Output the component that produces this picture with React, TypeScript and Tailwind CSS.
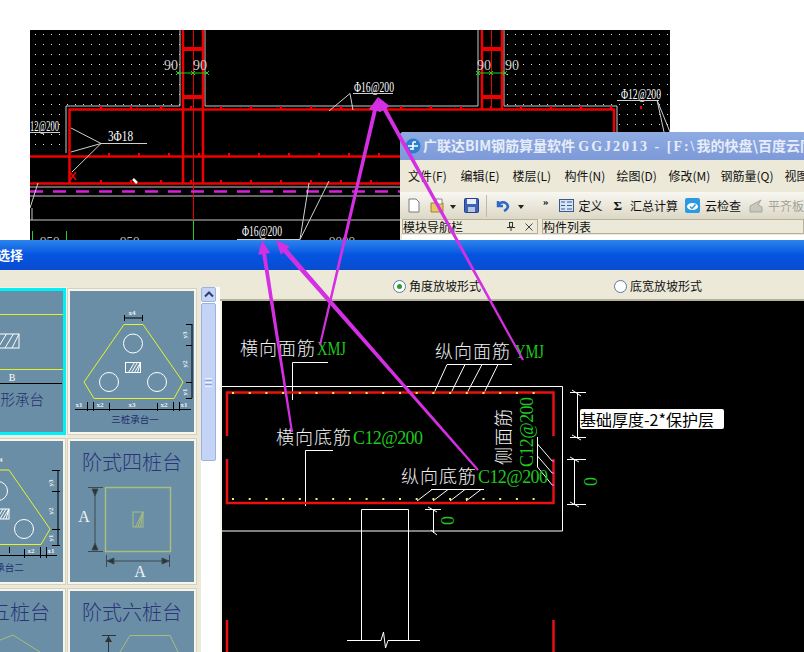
import React from 'react';

const cjk = '"Noto Sans CJK SC", "Noto Sans", sans-serif';
const serif = '"Liberation Serif", "Noto Sans CJK SC", serif';

const steps = (from: number, to: number, step: number) => {
  const out: number[] = [];
  for (let v = from; v <= to; v += step) out.push(v);
  return out;
};

// tapered magenta arrow from a thin tail to a wide head
const Arrow = ({ x1, y1, x2, y2, w1, w2 }: { x1: number; y1: number; x2: number; y2: number; w1: number; w2: number }) => {
  const len = Math.hypot(x2 - x1, y2 - y1);
  const ux = (x2 - x1) / len;
  const uy = (y2 - y1) / len;
  const nx = -uy;
  const ny = ux;
  const hx = x2 - ux * 14;
  const hy = y2 - uy * 14;
  const body = [
    [x1 + nx * w1, y1 + ny * w1],
    [hx + nx * w2, hy + ny * w2],
    [hx + nx * 6, hy + ny * 6],
    [x2, y2],
    [hx - nx * 6, hy - ny * 6],
    [hx - nx * w2, hy - ny * w2],
    [x1 - nx * w1, y1 - ny * w1],
  ];
  return <polygon points={body.map((p) => p.join(',')).join(' ')} fill="#d42fe2" />;
};

const Hatch = ({ x, y, w, h, color = '#fff', n = 4 }: { x: number; y: number; w: number; h: number; color?: string; n?: number }) => (
  <g stroke={color} strokeWidth="1" fill="none">
    <rect x={x} y={y} width={w} height={h} />
    {steps(1, n, 1).map((i) => {
      const px = x + (i * w) / (n + 1);
      return <line key={i} x1={px} y1={y + h} x2={Math.min(px + h * 0.6, x + w)} y2={y} />;
    })}
  </g>
);

const RebarText = ({ x, y, t, w }: { x: number; y: number; t: string; w: number }) => (
  <text x={x} y={y} fill="#fff" fontSize="14" fontFamily={serif} textLength={w} lengthAdjust="spacingAndGlyphs">
    {t}
  </text>
);

const TopDrawing = () => {
  const redTicks = steps(100, 670, 30);
  return (
    <svg viewBox="30 30 640 210" className="w-[640px] h-[210px] block bg-black">
      <defs>
        <pattern id="dots" x="0" y="0" width="8" height="10" patternUnits="userSpaceOnUse">
          <rect x="3" y="4" width="1" height="1" fill="#e4e4e4" />
        </pattern>
      </defs>
      <path d="M30 30H180V106H66V153H30Z" fill="url(#dots)" />
      <path d="M504 30H670V132H617V106H504Z" fill="url(#dots)" />
      {/* walls */}
      <g stroke="#c8c8c8" strokeWidth="1" fill="none">
        <path d="M180 30V106H66V153" />
        <path d="M205 30V106H478V30" />
        <path d="M504 30V106H617V132" />
        <path d="M30 187H670M30 196H670M30 220H670" />
        <path d="M32 208V220" />
      </g>
      {/* rebar */}
      <g stroke="#f00000" fill="none">
        <path d="M69.500 183V109.500H614V132" strokeWidth="2.500" />
        <path d="M30 156.500H670M30 183.500H670" strokeWidth="2.500" />
        <path d="M183 30V183M203 30V183M482 30V109M502 30V109" strokeWidth="2.500" />
        <path d="M193.500 30V220M491.500 30V109" strokeWidth="1" />
        <path d="M184 49H202M184 97H202M483 49H501M483 97H501" strokeWidth="4" />
        <path d="M70 180L76 172M70 172L76 180" strokeWidth="1.500" />
      </g>
      <g fill="#f00000">
        {redTicks.map((x) => (
          <g key={x}>
            <rect x={x} y={106} width="2" height="3" />
            <rect x={x + 8} y={153} width="2" height="3" />
            <rect x={x} y={180} width="2" height="3" />
          </g>
        ))}
      </g>
      {/* dashed centre line */}
      <line x1="30" y1="191.500" x2="670" y2="191.500" stroke="#d81fe0" strokeWidth="2.500" strokeDasharray="13 10" />
      {/* green dims */}
      <g stroke="#22d022" fill="none">
        <path d="M178 73H207M479 73H506" strokeWidth="1" />
        <path d="M193.500 220V240M32.500 231V240M66.500 231V240" strokeWidth="1" />
        <path d="M176 71l4 4M176 75l4-4M191 71l4 4M191 75l4-4M205 71l4 4M205 75l4-4M476 71l4 4M476 75l4-4M489 71l4 4M489 75l4-4M503 71l4 4M503 75l4-4" strokeWidth="1" />
      </g>
      <g fill="#cfcfcf" fontFamily={serif} fontSize="14">
        <text x="164" y="70">90</text>
        <text x="193" y="70">90</text>
        <text x="477" y="70">90</text>
        <text x="505" y="70">90</text>
      </g>
      <RebarText x={354} y={92} t="Φ16@200" w={40} />
      <RebarText x={621} y={99} t="Φ12@200" w={40} />
      <RebarText x={242} y={236} t="Φ16@200" w={40} />
      <RebarText x={30} y={131} t="12@200" w={29} />
      <RebarText x={108} y={141} t="3Φ18" w={25} />
      <g fill="#bdbdbd" fontSize="13" fontFamily={serif}>
        <text x="40" y="245">950</text>
        <text x="120" y="245">950</text>
        <text x="329" y="245">9000</text>
      </g>
      {/* leaders */}
      <g stroke="#d0d0d0" strokeWidth="1" fill="none">
        <path d="M353 93.500H393M329 111L350 93.500L353 110" />
        <path d="M617 100.500H659M657 100L670 132M657 100L664 132" />
        <path d="M237 239.500H300L309 183M300 239.500L329 181" />
        <path d="M30 132.500H60" />
        <path d="M147 143.500H101L71 128M101 143.500L71 152M101 143.500L72 172" />
        <path d="M38 183L30 208" />
      </g>
      <line x1="133" y1="179" x2="137" y2="183" stroke="#fff" strokeWidth="2.500" />
    </svg>
  );
};

const Tile = ({ viewBox, selected, children }: { viewBox: string; selected?: boolean; children: React.ReactNode }) => (
  <div
    className={
      selected
        ? 'h-[141px] bg-[#6a8ea6] outline-[3px] outline-[#00f0f8] shadow-[0_0_0_5px_#f3f1e6]'
        : 'h-[141px] bg-[#6a8ea6] shadow-[0_0_0_2px_#f7f5ec,0_0_0_3px_#d6d2c0]'
    }
  >
    <svg viewBox={viewBox} className="w-[124px] h-[141px] block">
      {children}
    </svg>
  </div>
);

const DimText = ({ x, y, t, rot }: { x: number; y: number; t: string; rot?: boolean }) => (
  <text
    x={x}
    y={y}
    fill="#f0f0f0"
    fontSize="7"
    fontWeight="700"
    fontFamily={serif}
    textAnchor="middle"
    transform={rot ? `rotate(-90 ${x} ${y})` : undefined}
  >
    {t}
  </text>
);

const TileList = () => (
  <div className="grid grid-cols-[124px_124px] gap-x-[7px] gap-y-[9px] -ml-[61px] w-[255px]">
    <Tile viewBox="-61 291 124 141" selected>
      <g stroke="#e4f020" strokeWidth="1">
        <path d="M-61 314.500H63M-61 369.500H63" />
      </g>
      <Hatch x={-30} y={334} w={49} h={14} n={6} />
      <path d="M-61 383.500H62" stroke="#000" />
      <text x="12" y="381" fill="#fff" fontSize="10" fontFamily={serif} textAnchor="middle">B</text>
      <text x="-14" y="405" fill="#232f6e" fontSize="14.500" fontFamily={cjk} fontWeight="300">矩形承台</text>
    </Tile>
    <Tile viewBox="70 291 124 141">
      <polygon points="124,324.500 143,324.500 183,382 174,398.500 94,398.500 84,382" fill="none" stroke="#e8f428" />
      <g fill="none" stroke="#fff">
        <circle cx="133" cy="343.500" r="9.500" />
        <circle cx="109" cy="382" r="9.500" />
        <circle cx="157" cy="382" r="9.500" />
      </g>
      <Hatch x={125.500} y={362.500} w={15} h={10} />
      <g stroke="#000" fill="none">
        <path d="M124.500 315V321M142.500 315V321M124.500 318H142.500" />
        <path d="M192 324V398M186 324.500H192M186 345.500H192M186 382.500H192M186 398.500H192" />
        <path d="M75 409.500H191M87.500 402V411M93.500 402V411M109.500 403V411M157.500 403V411M173.500 402V411M179.500 402V411" />
      </g>
      <DimText x={132} y={315} t="x4" />
      <DimText x={79} y={407} t="x1" />
      <DimText x={100} y={407} t="x2" />
      <DimText x={132} y={407} t="x3" />
      <DimText x={164} y={407} t="x2" />
      <DimText x={184} y={407} t="x1" />
      <DimText x={187} y={335} t="y3" rot />
      <DimText x={187} y={364} t="y2" rot />
      <DimText x={187} y={392} t="y1" rot />
      <text x="135" y="423" fill="#232f6e" fontSize="9.500" fontFamily={cjk} textAnchor="middle">三桩承台一</text>
    </Tile>
    <Tile viewBox="-61 441 124 141">
      <polygon points="-10,470 9,470 50,529 41,544.500 -39,544.500 -49,529" fill="none" stroke="#e8f428" />
      <g fill="none" stroke="#fff">
        <circle cx="-2" cy="491" r="9.500" />
        <circle cx="24" cy="529" r="9.500" />
      </g>
      <Hatch x={-6} y={509} w={15} h={10} />
      <g stroke="#000" fill="none">
        <path d="M58 470V545M52 470.500H60M52 491.500H60M52 529.500H60M52 545.500H60" />
        <path d="M-50 555.500H57M24.500 549V558M40.500 547V558M46.500 547V558M9.500 547V553" />
      </g>
      <DimText x={-1} y={462} t="x4" />
      <DimText x={31} y={553} t="x2" />
      <DimText x={51} y={553} t="x1" />
      <DimText x={53} y={483} t="y3" rot />
      <DimText x={53} y={511} t="y2" rot />
      <DimText x={53} y={538} t="y1" rot />
      <text x="0" y="571" fill="#232f6e" fontSize="9.500" fontFamily={cjk} textAnchor="middle">三桩承台二</text>
    </Tile>
    <Tile viewBox="70 441 124 141">
      <text x="132" y="470" fill="#2a3578" fontSize="20" fontFamily={cjk} fontWeight="300" textAnchor="middle">阶式四桩台</text>
      <rect x="105.500" y="487.500" width="65" height="64" fill="none" stroke="#a6bd7e" strokeWidth="1.500" />
      <Hatch x={133} y={512} w={10} h={15} color="#a6bd7e" n={3} />
      <g stroke="#3d4a52" fill="#2c3438">
        <path d="M95 489V550M88 487.500H103M88 551.500H103" fill="none" />
        <path d="M92 489H98L95 496ZM92 550H98L95 543Z" />
        <path d="M107 561H169M106.500 555V567M169.500 555V567" fill="none" />
        <path d="M107 561L114 558V564ZM169 561L162 558V564Z" />
      </g>
      <text x="84" y="522" fill="#f2f2f2" fontSize="16" fontFamily={serif} textAnchor="middle">A</text>
      <text x="140" y="577" fill="#f2f2f2" fontSize="16" fontFamily={serif} textAnchor="middle">A</text>
    </Tile>
    <Tile viewBox="-61 591 124 141">
      <text x="0" y="620" fill="#2a3578" fontSize="20" fontFamily={cjk} fontWeight="300" textAnchor="middle">阶式五桩台</text>
      <path d="M-30 652L13 635L40 652" fill="none" stroke="#a6bd7e" />
    </Tile>
    <Tile viewBox="70 591 124 141">
      <text x="132" y="620" fill="#2a3578" fontSize="20" fontFamily={cjk} fontWeight="300" textAnchor="middle">阶式六桩台</text>
      <path d="M120 652L130 635.500H170L178 652" fill="none" stroke="#a6bd7e" />
      <path d="M102 635.500H116M108.500 636V652" fill="none" stroke="#2c3438" />
      <path d="M105 642H112L108.500 636Z" fill="#2c3438" />
    </Tile>
  </div>
);

const ScrollBar = () => (
  <div className="w-[15px] flex flex-col bg-white">
    <div className="h-[15px] rounded-[2px] border border-[#9db2dd] bg-[#c6d5f5] flex items-center justify-center">
      <svg width="10" height="7" viewBox="0 0 10 7">
        <path d="M1 5.500L5 1.500L9 5.500" stroke="#2a3f78" strokeWidth="2" fill="none" />
      </svg>
    </div>
    <div className="h-[158px] mt-[1px] rounded-[2px] border border-[#9db2dd] bg-[#c4d3f6] flex flex-col gap-[1px] items-center justify-center">
      <div className="w-[7px] h-[1px] bg-[#eef2fc]" />
      <div className="w-[7px] h-[1px] bg-[#8ea4d6]" />
      <div className="w-[7px] h-[1px] bg-[#eef2fc]" />
      <div className="w-[7px] h-[1px] bg-[#8ea4d6]" />
      <div className="w-[7px] h-[1px] bg-[#eef2fc]" />
    </div>
  </div>
);

const CadLabel = ({ x, y, t, size = 18, spacing = 0, fill = '#f2f2f2', rot }: { x: number; y: number; t: string; size?: number; spacing?: number; fill?: string; rot?: boolean }) => (
  <text
    x={x}
    y={y}
    fill={fill}
    fontSize={size}
    letterSpacing={spacing}
    fontFamily={cjk}
    fontWeight="300"
    transform={rot ? `rotate(-90 ${x} ${y})` : undefined}
  >
    {t}
  </text>
);

const CadCode = ({ x, y, t, width, rot, squeeze }: { x: number; y: number; t: string; width?: number; rot?: boolean; squeeze?: boolean }) => (
  <text
    x={x}
    y={y}
    fill="#1fc81f"
    fontSize="18"
    fontFamily={serif}
    textLength={width}
    lengthAdjust={squeeze ? 'spacingAndGlyphs' : 'spacing'}
    transform={rot ? `rotate(-90 ${x} ${y})` : undefined}
  >
    {t}
  </text>
);

const SectionDrawing = () => {
  const dots = steps(232, 533, 16.700);
  return (
    <svg viewBox="222 301 582 351" className="w-[582px] h-[351px] block bg-black">
      <g stroke="#fff" fill="none" strokeWidth="1">
        <path d="M222 386.500H562.500V531H222" />
        <path d="M361.500 640V509.500H408.500V640" />
        <path d="M347 640.500H381L383.500 632L385.500 648L388 640.500H420" />
        <path d="M292.500 400V362.500H328M305.500 506V450.500H333" />
        <path d="M447 364.500H512M447 364.500L434 393M465 364.500L451 393M482 364.500L467 393M498 364.500L484 393" />
        <path d="M431 489.500H484M432 489.500L417 501M448 489.500L433 501M465 489.500L450 501M481 489.500L466 501" />
        <path d="M537.500 437V467L553 486M537.500 444L553 462M537.500 456L553 474" />
        <path d="M577.500 393V437M570 392.500H586M570 437.500H586M572 390L581 396M572 435L581 440" />
        <path d="M574.500 459V505M567 459.500H586M567 504.500H586M570 457L579 462M570 502L579 507" />
        <path d="M433.500 509V533M425 509.500H441M428 507L437 512M431 530L437 535" />
      </g>
      <g stroke="#e81010" strokeWidth="2.500" fill="none">
        <path d="M227 436V392.500H553.500V436" />
        <path d="M227 459V503H553.500V459" />
        <path d="M227 620V652M553.500 620V652" />
      </g>
      <g fill="#f8f060">
        {dots.map((x) => (
          <g key={x}>
            <rect x={x} y={392} width="2" height="2" />
            <rect x={x} y={498} width="2" height="2" />
          </g>
        ))}
      </g>
      <g fill="#e040e0">
        <rect x="552" y="460" width="2" height="2" />
        <rect x="552" y="472" width="2" height="2" />
        <rect x="552" y="484" width="2" height="2" />
      </g>
      <CadLabel x={240} y={355} t="横向面筋" spacing={1} />
      <CadCode x={317} y={355} t="XMJ" width={29} squeeze />
      <CadLabel x={435} y={358} t="纵向面筋" spacing={1} />
      <CadCode x={515} y={358} t="YMJ" width={29} squeeze />
      <CadLabel x={276} y={444} t="横向底筋" spacing={1} />
      <CadCode x={353} y={444} t="C12@200" width={70} />
      <CadLabel x={401} y={483} t="纵向底筋" spacing={1} />
      <CadCode x={478} y={483} t="C12@200" width={70} />
      <CadLabel x={510} y={465} t="侧面筋" spacing={1} rot />
      <CadCode x={533} y={467} t="C12@200" width={70} rot />
      <CadCode x={454} y={525} t="0" rot />
      <CadCode x={597} y={486} t="0" rot />
    </svg>
  );
};

const WinIcon = () => (
  <svg className="shrink-0" width="16" height="16" viewBox="0 0 16 16">
    <circle cx="8" cy="8" r="7.500" fill="#2b7fd0" />
    <path d="M3 8H13M8 4V12M8 4H11M5 11H8" stroke="#fff" strokeWidth="1.500" fill="none" />
  </svg>
);

const menus = [
  { label: '文件(F)', cls: 'w-[52.5px]' },
  { label: '编辑(E)', cls: 'w-[52px]' },
  { label: '楼层(L)', cls: 'w-[52px]' },
  { label: '构件(N)', cls: 'w-[52px]' },
  { label: '绘图(D)', cls: 'w-[52px]' },
  { label: '修改(M)', cls: 'w-[52px]' },
  { label: '钢筋量(Q)', cls: 'w-[64px]' },
  { label: '视图(V)', cls: 'w-[52px]' },
];

const AppWindow = () => (
  <div className="absolute left-[400px] top-[132px] w-[404px] h-[108px] flex flex-col rounded-tl-[4px] overflow-hidden bg-[#ece9d8]">
    <div className="h-[28px] bg-gradient-to-b from-[#8fabe2] to-[#7d9ad8] flex items-center pl-[5px] gap-[2px] shrink-0">
      <WinIcon />
      <span className="text-[14px] font-bold text-[#e6ecf9] whitespace-nowrap" style={{ fontFamily: cjk }}>
        广联达BIM钢筋算量软件 <span className="tracking-[2px]" style={{ fontFamily: serif }}>GGJ2013 - [F:\</span>我的快盘\百度云同步
      </span>
    </div>
    <div className="h-[32px] flex items-center pl-[8px] shrink-0 bg-[#ece9d8]">
      {menus.map((m) => (
        <span key={m.label} className={`${m.cls} shrink-0 text-[12px] text-[#111] whitespace-nowrap`} style={{ fontFamily: cjk }}>
          {m.label}
        </span>
      ))}
    </div>
    <div className="h-[27px] flex items-center pl-[8px] shrink-0 whitespace-nowrap bg-gradient-to-b from-[#f8f7f1] to-[#dcd8c6]">
      <svg className="shrink-0" width="12" height="15" viewBox="0 0 12 15">
        <path d="M1 1H8L11 4V14H1Z" fill="#fff" stroke="#7a7a7a" />
      </svg>
      <svg className="ml-[10px] shrink-0" width="16" height="15" viewBox="0 0 16 15">
        <path d="M1 5H13V14H1Z" fill="#e8c860" stroke="#a08030" />
        <path d="M6 1H12V6H6Z" fill="#fff" stroke="#888" />
      </svg>
      <span className="ml-[4px] mt-[2px] w-0 h-0 shrink-0 border-x-[3px] border-x-transparent border-t-[4px] border-t-[#222]" />
      <svg className="ml-[8px] shrink-0" width="15" height="15" viewBox="0 0 15 15">
        <rect x="0.500" y="0.500" width="14" height="14" rx="1" fill="#3f62b8" stroke="#27408a" />
        <rect x="3" y="1" width="9" height="5" fill="#e8eefc" />
        <rect x="4" y="9" width="7" height="5" fill="#b8c4e0" />
      </svg>
      <span className="ml-[7px] w-[1px] h-[22px] shrink-0 bg-[#bdb9a6]" />
      <svg className="ml-[8px] shrink-0" width="15" height="13" viewBox="0 0 15 13">
        <path d="M3 2V7H8M3 7C5 2 11 2 13 7C13 9 11 11 9 12" fill="none" stroke="#2f68c8" strokeWidth="2.500" />
      </svg>
      <span className="ml-[8px] mt-[2px] w-0 h-0 shrink-0 border-x-[3px] border-x-transparent border-t-[4px] border-t-[#222]" />
      <span className="ml-[19px] -mt-[8px] text-[11px] font-bold leading-none text-[#111]" style={{ fontFamily: serif }}>»</span>
      <svg className="ml-[10px] shrink-0" width="15" height="13" viewBox="0 0 15 13">
        <rect x="0.500" y="0.500" width="14" height="12" fill="#d6e4f7" stroke="#3a5a8c" />
        <path d="M2 3H6M2 6.500H6M2 10H6M8 3H13M8 6.500H13M8 10H13" stroke="#3a5a8c" />
      </svg>
      <span className="ml-[5px] shrink-0 text-[12px] text-[#111]" style={{ fontFamily: cjk }}>定义</span>
      <span className="ml-[11px] shrink-0 text-[13px] font-bold text-[#111]" style={{ fontFamily: serif }}>Σ</span>
      <span className="ml-[8px] shrink-0 text-[12px] text-[#111]" style={{ fontFamily: cjk }}>汇总计算</span>
      <svg className="ml-[7px] shrink-0" width="15" height="15" viewBox="0 0 15 15">
        <rect width="15" height="15" rx="2" fill="#2c9ae0" />
        <ellipse cx="7.500" cy="8.500" rx="5.500" ry="3.500" fill="#fff" />
        <path d="M5 8.500L7 10.500L10.500 6.500" stroke="#2c9ae0" strokeWidth="1.500" fill="none" />
      </svg>
      <span className="ml-[5px] shrink-0 text-[12px] text-[#111]" style={{ fontFamily: cjk }}>云检查</span>
      <svg className="ml-[8px] shrink-0" width="14" height="14" viewBox="0 0 14 14">
        <path d="M1 13V7L12 1L9 6L13 8V13Z" fill="#c8c8c0" stroke="#a8a8a0" />
      </svg>
      <span className="ml-[5px] shrink-0 text-[12px] text-[#a4a298]" style={{ fontFamily: cjk }}>平齐板</span>
    </div>
    <div className="h-[15px] flex pl-[2px] gap-[4px] shrink-0">
      <div className="w-[136px] border border-[#b5b19d] flex items-center justify-between pr-[4px]">
        <span className="text-[12px] leading-none text-[#111]" style={{ fontFamily: cjk }}>模块导航栏</span>
        <span className="flex items-center gap-[10px]">
          <svg className="shrink-0" width="8" height="9" viewBox="0 0 8 9">
            <path d="M2 .5H6M2.500 .5V5H5.500V.5M0 5.500H8M4 5.500V9" stroke="#333" fill="none" />
          </svg>
          <svg className="shrink-0" width="8" height="8" viewBox="0 0 8 8">
            <path d="M.5 .5L7.500 7.500M7.500 .5L.5 7.500" stroke="#444" fill="none" />
          </svg>
        </span>
      </div>
      <div className="flex-1 border border-[#b5b19d] flex items-center">
        <span className="text-[12px] leading-none text-[#111]" style={{ fontFamily: cjk }}>构件列表</span>
      </div>
    </div>
    <div className="flex-1 bg-white ml-[2px] mt-[1px]" />
  </div>
);

const Radio = ({ on, label, className }: { on?: boolean; label: string; className: string }) => (
  <div className={`flex items-center gap-[3px] ${className}`}>
    <span className="w-[13px] h-[13px] rounded-full border border-[#5a7a9a] bg-white flex items-center justify-center">
      {on && <span className="w-[5px] h-[5px] rounded-full bg-[#2f9a2f]" />}
    </span>
    <span className="text-[12px] text-[#111] whitespace-nowrap" style={{ fontFamily: cjk }}>
      {label}
    </span>
  </div>
);

export default function App() {
  return (
    <div className="relative w-[804px] h-[652px] overflow-hidden bg-white">
      <div className="h-[240px] pl-[30px] pt-[30px]">
        <TopDrawing />
      </div>

      <div className="h-[412px] flex flex-col">
        <div className="h-[30px] shrink-0 flex items-center bg-gradient-to-b from-[#2d84ec] via-[#0554e0] to-[#0a4cd0]">
          <span className="text-[13px] font-bold text-white -ml-[3px] whitespace-nowrap" style={{ fontFamily: cjk }}>
            选择
          </span>
        </div>
        <div className="flex flex-1 min-h-0">
          <div className="w-[220px] shrink-0 bg-[#ece9d8] pt-[17px] flex">
            <div className="w-[201px] overflow-hidden pt-[4px] shrink-0">
              <TileList />
            </div>
            <ScrollBar />
            <div className="flex-1 bg-white" />
          </div>
          <div className="flex-1 flex flex-col min-w-0">
            <div className="h-[31px] shrink-0 relative bg-[#ece9d8] border-b-[2px] border-[#b5b19d]">
              <Radio on label="角度放坡形式" className="absolute left-[173px] top-[7px]" />
              <Radio label="底宽放坡形式" className="absolute left-[394px] top-[7px]" />
            </div>
            <div className="border-l-[2px] border-[#f6f4ec] flex-1 overflow-hidden">
              <SectionDrawing />
            </div>
          </div>
        </div>
      </div>

      <AppWindow />

      <div className="absolute left-[580px] top-[409px] w-[144px] h-[20px] rounded-[2px] bg-white text-black text-[16px] leading-[20px] whitespace-nowrap" style={{ fontFamily: cjk }}>
        基础厚度-2*保护层
      </div>

      {/* annotation arrows drawn over everything */}
      <svg className="absolute left-0 top-0 w-[804px] h-[652px] pointer-events-none" viewBox="0 0 804 652">
        <Arrow x1={292} x2={262} y1={432} y2={240} w1={1} w2={2} />
        <Arrow x1={478} x2={276} y1={470} y2={240} w1={1} w2={2.500} />
        <Arrow x1={320} x2={378} y1={345} y2={97} w1={1} w2={2} />
        <Arrow x1={523} x2={378} y1={360} y2={97} w1={1} w2={2} />
      </svg>
    </div>
  );
}
